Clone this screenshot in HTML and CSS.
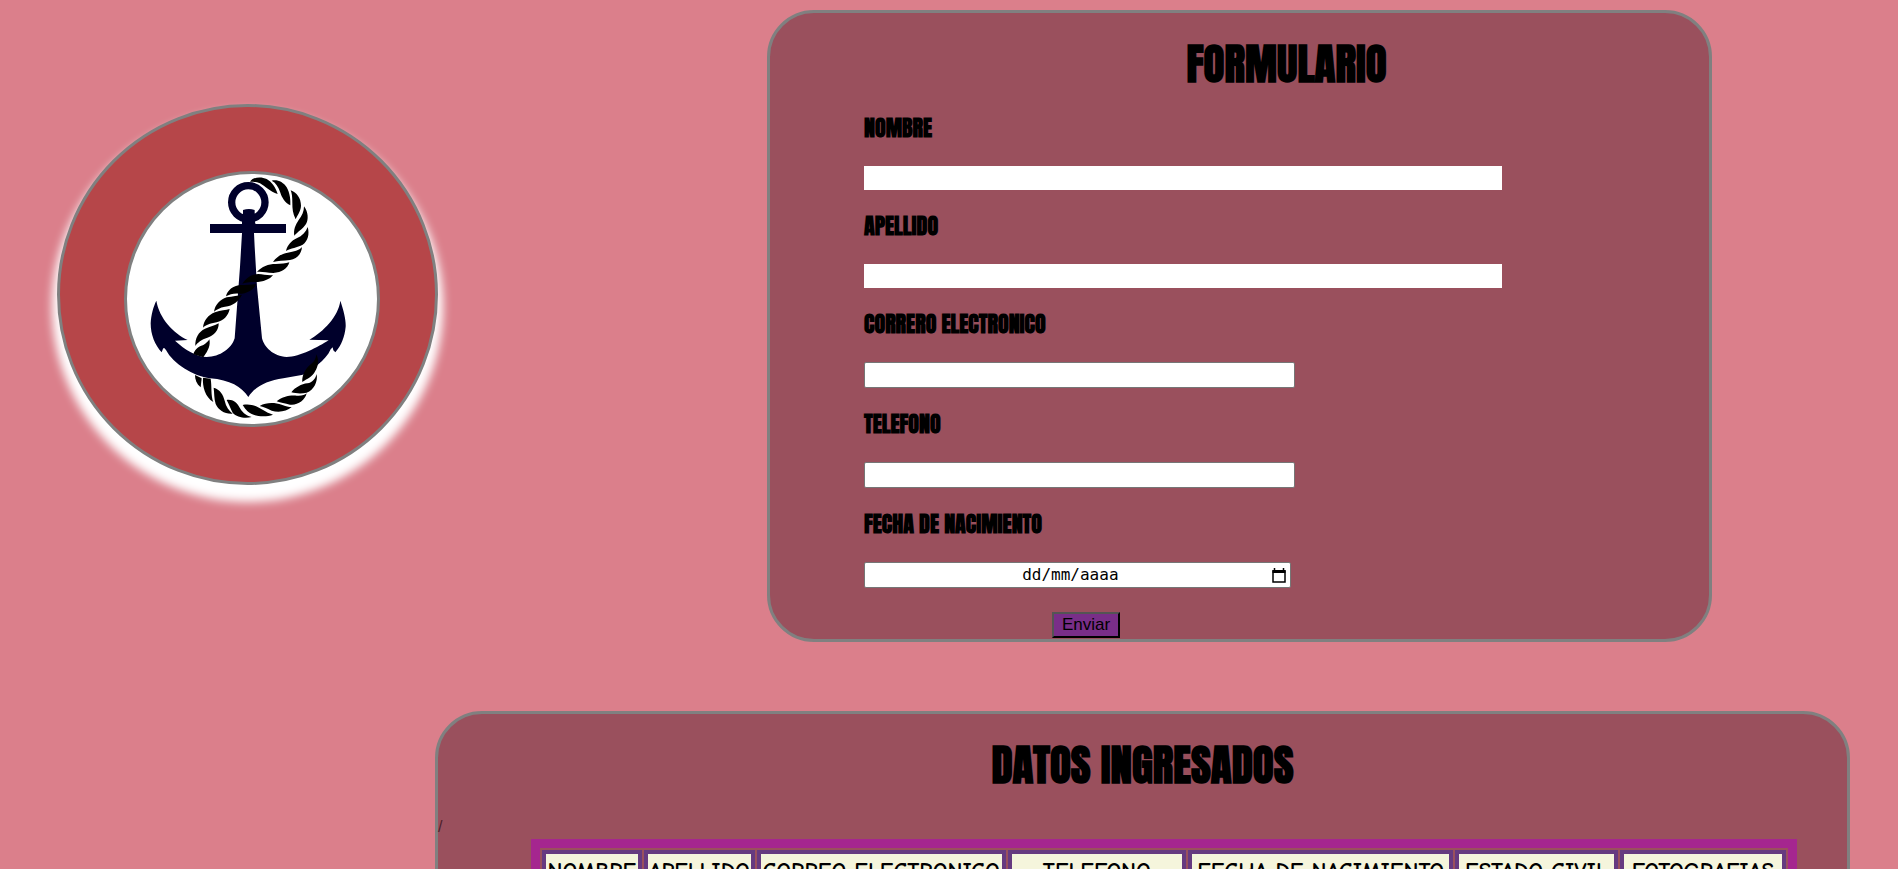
FILE: index.html
```html
<!DOCTYPE html>
<html lang="es">
<head>
<meta charset="utf-8">
<title>Formulario</title>
<link rel="stylesheet" href="styles.css">
</head>
<body>
<main class="top">
  <div class="buoy">
    <div class="badge">
      <svg class="anchor" viewBox="51 42 750 750" role="img" aria-label="Ancla">
        <g fill="#00002b">
          <circle cx="415" cy="127" r="50" fill="none" stroke="#00002b" stroke-width="22"/>
          <path d="M396 194V180L399 175V150Q417 144 434 150V175L436 194Z"/>
          <path d="M300 192H528V219H300Z"/>
          <path d="M396 190H436V219H432L434 260L441 380L456 535C462 560 490 590 530 591C570 591 625 560 656 541L598 539C640 515 685 470 691 422C702 455 708 480 707 500C704 530 695 555 676 577L670 571L668 562L662 568C655 585 640 600 625 613C610 630 590 642 575 645L520 655C470 662 435 680 415 711C395 680 360 660 300 655C250 648 190 612 168 570L162 563L159 566L155 577C135 555 122 525 122 490C123 465 130 440 139 422C148 475 190 520 233 540L195 542C225 570 260 590 290 591C330 591 365 565 374 535L390 320L396 219Z"/>
        </g>
        <g fill="#000">
          <path d="M420 65C430 50 455 50 470 57C485 65 497 82 503 102C480 95 465 78 450 70C440 66 430 65 420 65Z"/>
          <path d="M485 62C500 57 520 65 530 82C540 100 542 120 541 136C525 128 515 112 510 95C505 80 497 68 485 62Z"/>
          <path d="M542 91C560 97 573 115 573 137C572 155 562 165 557 178C548 160 547 145 547 128C547 112 546 100 542 91Z"/>
          <path d="M582 139C595 155 596 180 588 192C578 208 563 215 553 227C550 210 556 195 566 180C576 168 582 155 582 139Z"/>
          <path d="M593 201C599 222 594 243 578 254C562 263 542 264 528 273C532 255 545 242 560 235C577 227 588 216 593 201Z"/>
          <path d="M576 261C574 283 560 297 540 300C520 302 505 302 489 306C500 290 515 281 533 278C552 275 567 271 576 261Z"/>
          <path d="M538 307C533 325 515 338 490 339C470 339 455 334 441 336C455 320 475 312 497 312C513 312 527 311 538 307Z"/>
          <path d="M489 345C480 358 460 366 435 366C418 366 405 368 397 371C410 352 425 342 445 342C460 343 475 347 489 345Z"/>
          <path d="M439 372C430 390 410 402 385 401C370 400 358 404 348 409C352 390 370 377 390 375C410 375 425 374 439 372Z"/>
          <path d="M396 404C385 425 370 437 345 440C330 442 318 450 312 455C315 435 330 418 350 412C368 408 385 408 396 404Z"/>
          <path d="M359 447C355 468 340 482 320 487C300 490 285 496 279 503C281 482 295 464 315 457C332 451 348 450 359 447Z"/>
          <path d="M326 490C327 510 312 528 292 533C275 538 262 548 256 558C255 535 265 515 285 506C300 500 315 497 326 490Z"/>
          <path d="M298 538C302 555 296 570 280 592L250 583C255 565 270 558 280 555C288 550 294 545 298 538Z"/>
          <path d="M255 645C255 660 260 672 272 682L275 655Z"/>
          <path d="M279 653C277 680 285 710 310 726C302 705 306 680 302 656Z"/>
          <path d="M311 683C330 688 340 705 344 722C348 740 357 752 368 761C345 763 325 750 317 732C312 715 313 700 311 683Z"/>
          <path d="M350 720C367 717 382 728 390 745C400 762 412 768 425 771C405 776 380 772 368 758C362 747 357 733 350 720Z"/>
          <path d="M398 735C420 730 440 738 455 748C468 756 480 762 489 764C470 772 440 770 425 762C410 755 405 745 398 735Z"/>
          <path d="M449 738C470 726 495 728 515 734C528 738 540 742 545 741C530 755 505 758 485 752C470 745 460 741 449 738Z"/>
          <path d="M500 724C515 710 540 705 560 707C575 708 585 705 590 700C585 722 562 737 540 734C525 731 512 728 500 724Z"/>
          <path d="M544 697C555 682 575 672 592 670C607 668 617 655 620 642C624 665 612 690 590 698C572 702 558 700 544 697Z"/>
          <path d="M619 583C630 605 622 625 612 640C600 655 585 660 577 666C575 650 583 630 597 617C610 608 617 600 619 583Z"/>
        </g>
      </svg>
    </div>
  </div>
  <form class="panel form">
    <h1 class="title">FORMULARIO</h1>
    <label class="label" for="nombre">NOMBRE</label>
    <input class="field wide" id="nombre" type="text">
    <label class="label" for="apellido">APELLIDO</label>
    <input class="field wide" id="apellido" type="text">
    <label class="label" for="correo">CORRERO ELECTRONICO</label>
    <input class="field" id="correo" type="email">
    <label class="label" for="telefono">TELEFONO</label>
    <input class="field" id="telefono" type="tel">
    <label class="label" for="fecha">FECHA DE NACIMIENTO</label>
    <div class="field date">
      <input class="date-text" id="fecha" type="text" placeholder="dd/mm/aaaa">
      <button class="picker" type="button" aria-label="Abrir calendario">
        <svg viewBox="0 0 14 15" width="14" height="15"><path d="M2.500 0V2M11.500 0V2" stroke="#000" stroke-width="1.500"/><path d="M1 3H13V14H1Z" fill="none" stroke="#000" stroke-width="1.500"/><path d="M.5 2H13.500V5H.5Z"/></svg>
      </button>
    </div>
    <button class="send" type="submit">Enviar</button>
  </form>
</main>
<section class="panel data">
  <h1 class="title">DATOS INGRESADOS</h1>
  <div class="slash">/</div>
  <table class="table">
    <colgroup><col class="c1"><col class="c2"><col class="c3"><col class="c4"><col class="c5"><col class="c6"><col class="c7"></colgroup>
    <thead>
      <tr><th>NOMBRE</th><th>APELLIDO</th><th>CORREO ELECTRONICO</th><th>TELEFONO</th><th>FECHA DE NACIMIENTO</th><th>ESTADO CIVIL</th><th>FOTOGRAFIAS</th></tr>
    </thead>
  </table>
</section>
</body>
</html>
```
FILE: styles.css
```css
* { box-sizing: border-box; }
html { scrollbar-width: none; }
body {
  margin: 0;
  padding-top: 10px;
  background: #db7f8b;
  font-family: "Liberation Sans", Arial, sans-serif;
  font-size: 16px;
  color: #000;
}
.top {
  display: grid;
  grid-template-columns: 710px 1fr;
  padding: 0 186px 0 57px;
  align-items: start;
}
.buoy {
  display: flex;
  width: 381px;
  height: 381px;
  margin-top: 94px;
  padding: 64px 0 0 64px;
  border: 3px solid gray;
  border-radius: 50%;
  background: #b64649;
  box-shadow: 0 12px 10px 5px #fff;
}
.badge {
  width: 256px;
  height: 256px;
  border: 3px solid gray;
  border-radius: 50%;
  background: #fff;
  overflow: hidden;
}
.anchor { display: block; width: 100%; height: 100%; }
.panel {
  border: 3px solid gray;
  border-radius: 47px;
  background: #9a505d;
}
.title {
  margin: 27px 0 28px;
  font: bold 43px/48px Impact, Anton, "Liberation Sans Narrow", "Liberation Sans", sans-serif;
  text-align: center;
}
.form {
  display: flex;
  flex-direction: column;
  align-items: flex-start;
  padding: 0 0 1px 94px;
}
.form .title { align-self: stretch; }
.label {
  margin-bottom: 26px;
  font: bold 22px/24px Impact, Anton, "Liberation Sans Narrow", "Liberation Sans", sans-serif;
}
.field {
  width: 51%;
  height: 26px;
  margin: 0 0 24px;
  padding: 0 4px;
  border: 1px solid #767676;
  border-radius: 2px;
  background: #fff;
}
.wide {
  width: 75.5%;
  height: 24px;
  border: 0;
  border-radius: 0;
}
.date { display: flex; align-items: center; width: 50.5%; }
.date-text {
  flex: 1;
  min-width: 0;
  padding: 0;
  border: 0;
  background: none;
  font: 16px/20px "DejaVu Sans Mono", monospace;
  text-align: center;
}
.date-text::placeholder { color: #000; opacity: 1; }
.picker { display: flex; padding: 0; border: 0; background: none; }
.send {
  height: 26px;
  margin-left: 188px;
  padding: 0 8px;
  border: 2px outset #000;
  background: #792e88;
  font: 17px/20px "Liberation Sans", Arial, sans-serif;
  color: #000;
}
.data { margin: 69px 48px 0 435px; padding-bottom: 40px; }
.slash { line-height: 20px; color: #4d202b; }
.table {
  width: calc(100% - 143px);
  margin: 2px 50px 0 93px;
  border: 9px solid #a5268f;
  border-spacing: 2px;
  table-layout: fixed;
}
.table th {
  padding: 5px 0;
  border: 4px solid #663a80;
  background: #f5f5dc;
  font: bold 23px/24px "Comic Sans MS", "Comic Neue", "Open Sans", sans-serif;
  white-space: nowrap;
}
.c1 { width: 8.1%; }
.c2 { width: 9%; }
.c3 { width: 20.2%; }
.c4 { width: 14.5%; }
.c5 { width: 21.5%; }
.c6 { width: 13.2%; }
.c7 { width: 13.5%; }
```
